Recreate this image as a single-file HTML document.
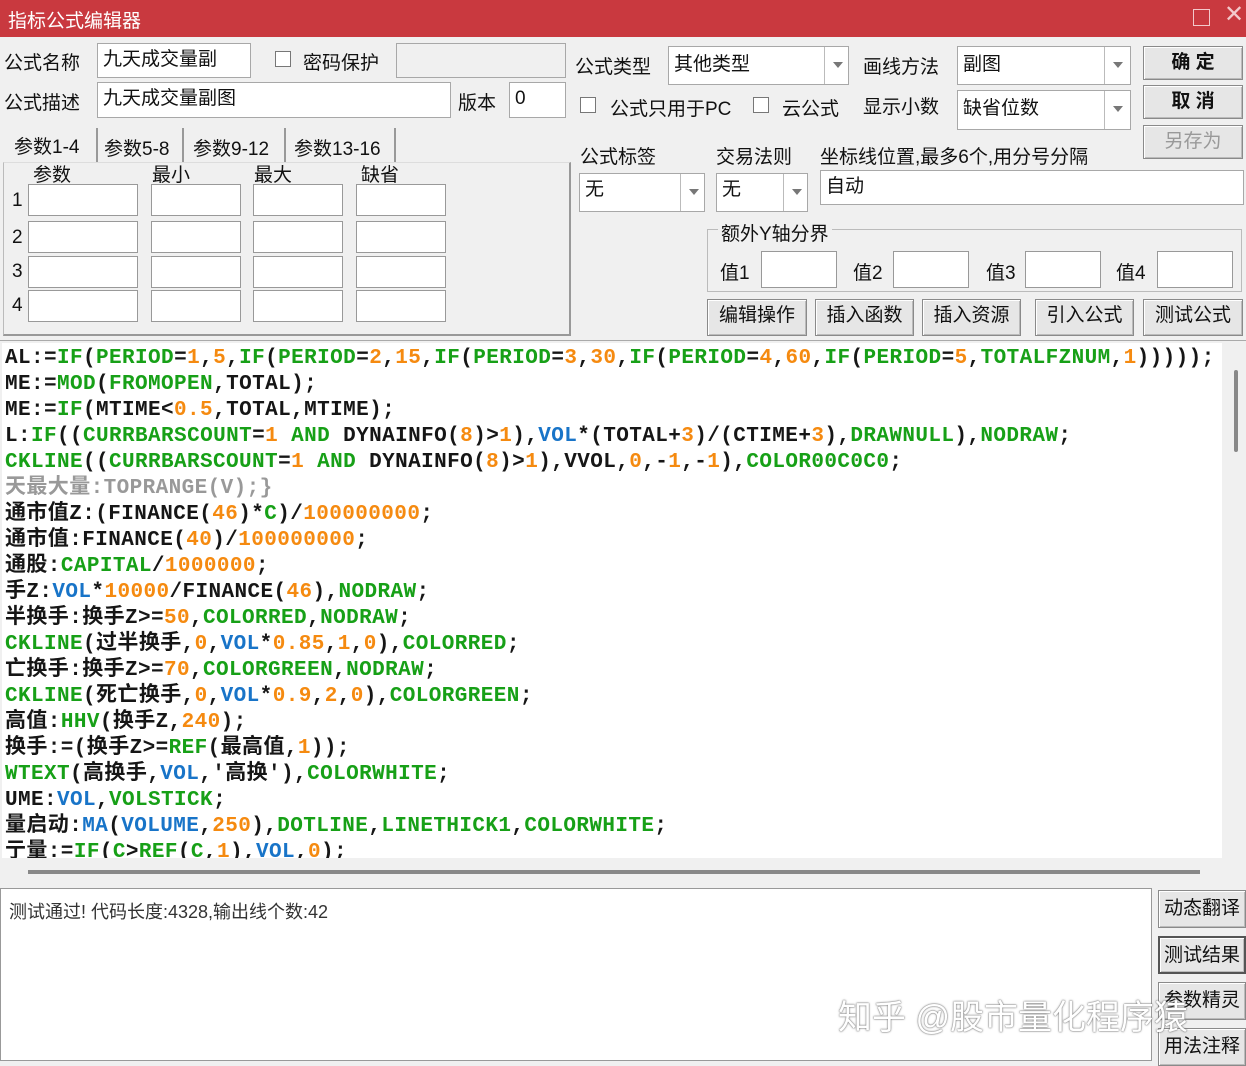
<!DOCTYPE html>
<html><head><meta charset="utf-8"><style>
*{margin:0;padding:0;box-sizing:border-box}
body{width:1246px;height:1061px;overflow:hidden;background:#f0f0f0;font-family:"Liberation Sans","Noto Sans CJK SC",sans-serif;font-size:19px;color:#111;position:relative}
.a{position:absolute}
.title{left:0;top:0;width:1246px;height:37px;background:#c9393f;color:#fff;font-size:19px;padding:6px 0 0 8px}
.inp{position:absolute;background:#fff;border:1px solid #a8a8a8;padding:2px 5px;font-size:19px;line-height:28px}
.lbl{position:absolute;font-size:19px;white-space:nowrap}
.btn{position:absolute;background:#e6e6e6;border:1px solid #8a8a8a;box-shadow:inset 1px 1px 0 #fff,inset -1px -1px 0 #bbb;text-align:center;font-size:19px;line-height:32px}
.cb{position:absolute;width:16px;height:16px;border:1px solid #777;background:#fff}
.dd{position:absolute;right:0;top:0;bottom:0;width:26px;border-left:1px solid #bbb;background:#fff}
.dd:after{content:"";position:absolute;left:8px;top:15px;border:5px solid transparent;border-top:6px solid #777}
.cell{position:absolute;width:90px;height:32px;background:#fff;border:1px solid #999}
pre{position:absolute;left:2px;top:343px;width:1220px;height:515px;background:#fff;font-family:"Liberation Mono","Noto Sans CJK SC",monospace;font-weight:bold;font-size:21px;line-height:26px;color:#161616;overflow:hidden;padding-left:3px;padding-top:3px;letter-spacing:0.4px}
.g{color:#17a017}.o{color:#f58a10}.b{color:#1874c8}.k{color:#999}
</style></head><body>
<div class="a title">指标公式编辑器</div>
<div class="a" style="left:1193px;top:9px;width:17px;height:17px;border:1px solid #f3c9cb"></div>
<div class="a" style="left:1224px;top:0px;color:#f3c9cb;font-size:24px">✕</div>

<div class="lbl" style="left:4px;top:48px">公式名称</div>
<div class="inp" style="left:97px;top:43px;width:154px;height:35px">九天成交量副</div>
<div class="cb" style="left:275px;top:51px"></div>
<div class="lbl" style="left:303px;top:48px">密码保护</div>
<div class="inp" style="left:396px;top:43px;width:170px;height:35px;background:#f0f0f0"></div>
<div class="lbl" style="left:4px;top:88px">公式描述</div>
<div class="inp" style="left:97px;top:82px;width:354px;height:36px">九天成交量副图</div>
<div class="lbl" style="left:458px;top:88px">版本</div>
<div class="inp" style="left:509px;top:82px;width:57px;height:36px">0</div>

<div class="lbl" style="left:14px;top:132px">参数1-4</div>
<div class="a" style="left:96px;top:128px;width:2px;height:34px;background:#999"></div>
<div class="lbl" style="left:104px;top:134px">参数5-8</div>
<div class="a" style="left:182px;top:128px;width:2px;height:34px;background:#999"></div>
<div class="lbl" style="left:193px;top:134px">参数9-12</div>
<div class="a" style="left:284px;top:128px;width:2px;height:34px;background:#999"></div>
<div class="lbl" style="left:294px;top:134px">参数13-16</div>
<div class="a" style="left:394px;top:128px;width:2px;height:34px;background:#999"></div>
<div class="a" style="left:3px;top:162px;width:568px;height:174px;border:1px solid #bbb;border-top:1px solid #ddd;border-right:2px solid #999;border-bottom:2px solid #999"></div>
<div class="lbl" style="left:33px;top:160px">参数</div>
<div class="lbl" style="left:152px;top:160px">最小</div>
<div class="lbl" style="left:254px;top:160px">最大</div>
<div class="lbl" style="left:361px;top:160px">缺省</div>
<div class="lbl" style="left:12px;top:190px">1</div><div class="lbl" style="left:12px;top:227px">2</div><div class="lbl" style="left:12px;top:261px">3</div><div class="lbl" style="left:12px;top:295px">4</div>
<div class="cell" style="left:28px;top:184px;width:110px"></div><div class="cell" style="left:151px;top:184px"></div><div class="cell" style="left:253px;top:184px"></div><div class="cell" style="left:356px;top:184px"></div>
<div class="cell" style="left:28px;top:221px;width:110px"></div><div class="cell" style="left:151px;top:221px"></div><div class="cell" style="left:253px;top:221px"></div><div class="cell" style="left:356px;top:221px"></div>
<div class="cell" style="left:28px;top:256px;width:110px"></div><div class="cell" style="left:151px;top:256px"></div><div class="cell" style="left:253px;top:256px"></div><div class="cell" style="left:356px;top:256px"></div>
<div class="cell" style="left:28px;top:290px;width:110px"></div><div class="cell" style="left:151px;top:290px"></div><div class="cell" style="left:253px;top:290px"></div><div class="cell" style="left:356px;top:290px"></div>

<div class="lbl" style="left:575px;top:52px">公式类型</div>
<div class="inp" style="left:668px;top:46px;width:181px;height:39px;line-height:31px">其他类型<div class="dd" style="width:24px"></div></div>
<div class="lbl" style="left:863px;top:52px">画线方法</div>
<div class="inp" style="left:957px;top:46px;width:174px;height:39px;line-height:31px">副图<div class="dd"></div></div>
<div class="cb" style="left:580px;top:97px"></div>
<div class="lbl" style="left:610px;top:94px">公式只用于PC</div>
<div class="cb" style="left:753px;top:97px"></div>
<div class="lbl" style="left:782px;top:94px">云公式</div>
<div class="lbl" style="left:863px;top:92px">显示小数</div>
<div class="inp" style="left:957px;top:90px;width:174px;height:40px;line-height:32px">缺省位数<div class="dd"></div></div>
<div class="btn" style="left:1143px;top:46px;width:100px;height:34px;font-weight:bold">确&nbsp;定</div>
<div class="btn" style="left:1143px;top:85px;width:100px;height:34px;font-weight:bold">取&nbsp;消</div>
<div class="btn" style="left:1143px;top:125px;width:100px;height:34px;color:#999">另存为</div>

<div class="lbl" style="left:580px;top:142px">公式标签</div>
<div class="lbl" style="left:716px;top:142px">交易法则</div>
<div class="lbl" style="left:820px;top:142px">坐标线位置,最多6个,用分号分隔</div>
<div class="inp" style="left:579px;top:173px;width:126px;height:39px">无<div class="dd" style="width:24px"></div></div>
<div class="inp" style="left:716px;top:173px;width:92px;height:39px">无<div class="dd" style="width:24px"></div></div>
<div class="inp" style="left:820px;top:170px;width:424px;height:35px">自动</div>
<div class="a" style="left:707px;top:229px;width:535px;height:63px;border:1px solid #bbb"></div>
<div class="lbl" style="left:718px;top:219px;background:#f0f0f0;padding:0 3px">额外Y轴分界</div>
<div class="lbl" style="left:720px;top:258px">值1</div><div class="cell" style="left:761px;top:251px;width:76px;height:37px"></div>
<div class="lbl" style="left:853px;top:258px">值2</div><div class="cell" style="left:893px;top:251px;width:76px;height:37px"></div>
<div class="lbl" style="left:986px;top:258px">值3</div><div class="cell" style="left:1025px;top:251px;width:76px;height:37px"></div>
<div class="lbl" style="left:1116px;top:258px">值4</div><div class="cell" style="left:1157px;top:251px;width:76px;height:37px"></div>
<div class="btn" style="left:707px;top:299px;width:100px;height:37px">编辑操作</div>
<div class="btn" style="left:815px;top:299px;width:99px;height:37px">插入函数</div>
<div class="btn" style="left:922px;top:299px;width:99px;height:37px">插入资源</div>
<div class="btn" style="left:1035px;top:299px;width:99px;height:37px">引入公式</div>
<div class="btn" style="left:1143px;top:299px;width:100px;height:37px">测试公式</div>

<div class="a" style="left:0;top:340px;width:1246px;height:1px;background:#aaa"></div>
<pre>AL:=<span class="g">IF</span>(<span class="g">PERIOD</span>=<span class="o">1</span>,<span class="o">5</span>,<span class="g">IF</span>(<span class="g">PERIOD</span>=<span class="o">2</span>,<span class="o">15</span>,<span class="g">IF</span>(<span class="g">PERIOD</span>=<span class="o">3</span>,<span class="o">30</span>,<span class="g">IF</span>(<span class="g">PERIOD</span>=<span class="o">4</span>,<span class="o">60</span>,<span class="g">IF</span>(<span class="g">PERIOD</span>=<span class="o">5</span>,<span class="g">TOTALFZNUM</span>,<span class="o">1</span>)))));
ME:=<span class="g">MOD</span>(<span class="g">FROMOPEN</span>,TOTAL);
ME:=<span class="g">IF</span>(MTIME&lt;<span class="o">0.5</span>,TOTAL,MTIME);
L:<span class="g">IF</span>((<span class="g">CURRBARSCOUNT</span>=<span class="o">1</span> <span class="g">AND</span> DYNAINFO(<span class="o">8</span>)&gt;<span class="o">1</span>),<span class="b">VOL</span>*(TOTAL+<span class="o">3</span>)/(CTIME+<span class="o">3</span>),<span class="g">DRAWNULL</span>),<span class="g">NODRAW</span>;
<span class="g">CKLINE</span>((<span class="g">CURRBARSCOUNT</span>=<span class="o">1</span> <span class="g">AND</span> DYNAINFO(<span class="o">8</span>)&gt;<span class="o">1</span>),VVOL,<span class="o">0</span>,-<span class="o">1</span>,-<span class="o">1</span>),<span class="g">COLOR00C0C0</span>;
<span class="k">天最大量:TOPRANGE(V);}</span>
通市值Z:(FINANCE(<span class="o">46</span>)*<span class="g">C</span>)/<span class="o">100000000</span>;
通市值:FINANCE(<span class="o">40</span>)/<span class="o">100000000</span>;
通股:<span class="g">CAPITAL</span>/<span class="o">1000000</span>;
手Z:<span class="b">VOL</span>*<span class="o">10000</span>/FINANCE(<span class="o">46</span>),<span class="g">NODRAW</span>;
半换手:换手Z&gt;=<span class="o">50</span>,<span class="g">COLORRED</span>,<span class="g">NODRAW</span>;
<span class="g">CKLINE</span>(过半换手,<span class="o">0</span>,<span class="b">VOL</span>*<span class="o">0.85</span>,<span class="o">1</span>,<span class="o">0</span>),<span class="g">COLORRED</span>;
亡换手:换手Z&gt;=<span class="o">70</span>,<span class="g">COLORGREEN</span>,<span class="g">NODRAW</span>;
<span class="g">CKLINE</span>(死亡换手,<span class="o">0</span>,<span class="b">VOL</span>*<span class="o">0.9</span>,<span class="o">2</span>,<span class="o">0</span>),<span class="g">COLORGREEN</span>;
高值:<span class="g">HHV</span>(换手Z,<span class="o">240</span>);
换手:=(换手Z&gt;=<span class="g">REF</span>(最高值,<span class="o">1</span>));
<span class="g">WTEXT</span>(高换手,<span class="b">VOL</span>,'高换'),<span class="g">COLORWHITE</span>;
UME:<span class="b">VOL</span>,<span class="g">VOLSTICK</span>;
量启动:<span class="b">MA</span>(<span class="b">VOLUME</span>,<span class="o">250</span>),<span class="g">DOTLINE</span>,<span class="g">LINETHICK1</span>,<span class="g">COLORWHITE</span>;
亍量:=<span class="g">IF</span>(<span class="g">C</span>&gt;<span class="g">REF</span>(<span class="g">C</span>,<span class="o">1</span>),<span class="b">VOL</span>,<span class="o">0</span>);</pre>
<div class="a" style="left:1222px;top:343px;width:24px;height:542px;background:#f0f0f0"></div>
<div class="a" style="left:1234px;top:370px;width:4px;height:82px;background:#888;border-radius:2px"></div>
<div class="a" style="left:28px;top:870px;width:1172px;height:4px;background:#888"></div>
<div class="a" style="left:0;top:888px;width:1152px;height:173px;background:#fff;border:1px solid #999"></div>
<div class="lbl" style="left:9px;top:898px;font-size:18px;color:#333">测试通过! 代码长度:4328,输出线个数:42</div>
<div class="btn" style="left:1158px;top:890px;width:88px;height:38px;line-height:36px">动态翻译</div>
<div class="btn" style="left:1158px;top:936px;width:88px;height:38px;line-height:36px;border:2px solid #555">测试结果</div>
<div class="btn" style="left:1158px;top:982px;width:88px;height:38px;line-height:36px">参数精灵</div>
<div class="btn" style="left:1158px;top:1028px;width:88px;height:38px;line-height:36px">用法注释</div>
<div class="lbl" style="left:838px;top:990px;font-size:34px;color:#fff;text-shadow:0 0 2px #777,0 0 1px #555">知乎 @股市量化程序猿</div>
</body></html>
